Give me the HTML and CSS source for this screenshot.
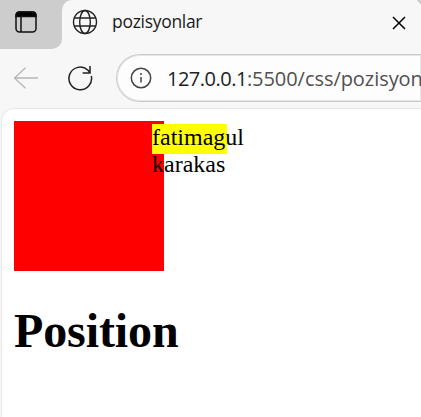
FILE: index.html
```html
<!DOCTYPE html>
<html lang="tr">
<head>
<meta charset="utf-8">
<title>pozisyonlar</title>
<link rel="stylesheet" href="styles.css">
</head>
<body>
<div class="browser">
  <header class="tabs">
    <div class="tab-menu">
      <svg width="22" height="22" viewBox="0 0 22 22" fill="none" stroke="#111" stroke-width="1.5"><rect x="1" y="1" width="20" height="20" rx="3.5"/><path d="M1 5.5V4.5Q1 1 4.500 1H17.500Q21 1 21 4.500V5.500Z" fill="#000"/><path d="M6 6V21"/></svg>
    </div>
    <div class="tab">
      <svg class="globe" width="26" height="26" viewBox="0 0 26 26" fill="none" stroke="#222" stroke-width="1.4"><circle cx="13" cy="13" r="11.5"/><ellipse cx="13" cy="13" rx="5.3" ry="11.5"/><path d="M2.300 9H23.700M2.300 17H23.700"/></svg>
      <span class="tab-title">pozisyonlar</span>
      <svg class="close" width="14" height="14" viewBox="0 0 14 14" stroke="#000" stroke-width="1.5"><path d="M1 1L13 13M13 1L1 13"/></svg>
      <i class="tab-corner"></i>
    </div>
  </header>
  <nav class="toolbar">
    <svg class="back" width="26" height="22" viewBox="0 0 26 22" fill="none" stroke="#b5b5b5" stroke-width="1.3"><path d="M12.500 .8L1.500 11L12.500 21.200M1.500 11H25"/></svg>
    <svg class="reload" width="26" height="26" viewBox="0 0 26 26" fill="none" stroke="#222" stroke-width="1.5"><path d="M24.300 11A11.300 11.300 0 1 1 20.800 5L22.800 7.500M23 .9V8H15.600"/></svg>
    <div class="address">
      <svg width="22" height="22" viewBox="0 0 22 22" fill="none" stroke="#444" stroke-width="1.5"><circle cx="11" cy="11" r="9.700"/><path d="M11 10V15.500"/><circle cx="11" cy="7" r="1" fill="#444" stroke="none"/></svg>
      <span class="url"><span class="host">127.0.0.1</span>:5500/css/pozisyonlar.html</span>
    </div>
  </nav>
  <main class="page">
    <div class="red"><div class="yellow">fatimagul karakas</div></div>
    <h1>Position</h1>
  </main>
</div>
</body>
</html>
```
FILE: styles.css
```css
* { box-sizing: border-box; }
body { margin: 0; overflow: hidden; }
svg { display: block; flex: none; }
.browser {
  display: flex;
  flex-direction: column;
  width: 421px;
  height: 417px;
  overflow: hidden;
  background: #f7f7f7;
  font-family: "Open Sans", "Noto Sans", sans-serif;
}
.tabs {
  display: flex;
  height: 49px;
  background: linear-gradient(#cdcdcd, #cdcdcd) 0 0 / 80px 14px no-repeat;
}
.tab-menu {
  width: 62px;
  padding: 11px 0 0 15px;
  background: #cdcdcd;
  border-bottom-right-radius: 10px;
}
.tab {
  position: relative;
  display: flex;
  flex: 1;
  align-items: center;
  padding: 0 15px 5px 10px;
  background: #f7f7f7;
  border-top-left-radius: 10px;
}
.tab-title {
  margin: -2px 0 0 14px;
  font-size: 17.5px;
  line-height: 24px;
  letter-spacing: -0.3px;
  color: #1b1b1b;
}
.close { margin: 2px 0 0 auto; }
.tab-corner {
  position: absolute;
  top: 0;
  right: 0;
  width: 4px;
  height: 4px;
  background: linear-gradient(45deg, transparent 50%, #cdcdcd 50%);
}
.toolbar {
  display: flex;
  align-items: center;
  height: 59px;
  padding: 0 0 1px 13px;
}
.reload { margin-left: 28px; }
.address {
  display: flex;
  flex: 1;
  align-items: center;
  height: 48px;
  margin-left: 23px;
  padding-left: 13px;
  overflow: hidden;
  background: #fdfdfd;
  border: 1px solid #cacaca;
  border-right: 0;
  border-radius: 24px 0 0 24px;
  box-shadow: inset 0 0 0 1px #e6e6e6;
}
.url {
  margin-left: 15px;
  font-size: 20px;
  letter-spacing: -0.05px;
  white-space: nowrap;
  color: #505050;
}
.host { color: #222; letter-spacing: -0.5px; }
.page {
  flex: 1;
  margin-left: 1px;
  padding: 12px;
  background: #fff;
  border: 1px solid #e8e8e8;
  border-width: 1px 0 0 1px;
  border-top-left-radius: 13px;
  font: 24px/27px "Liberation Serif", serif;
  color: #000;
}
.red { width: 150px; height: 150px; background: #f00; }
.yellow {
  position: relative;
  top: 3px;
  left: 138px;
  width: 75px;
  height: 30px;
  background: #ff0;
}
h1 { margin: 32px 0 0; font-size: 48px; line-height: 56px; letter-spacing: -0.1px; }
```
